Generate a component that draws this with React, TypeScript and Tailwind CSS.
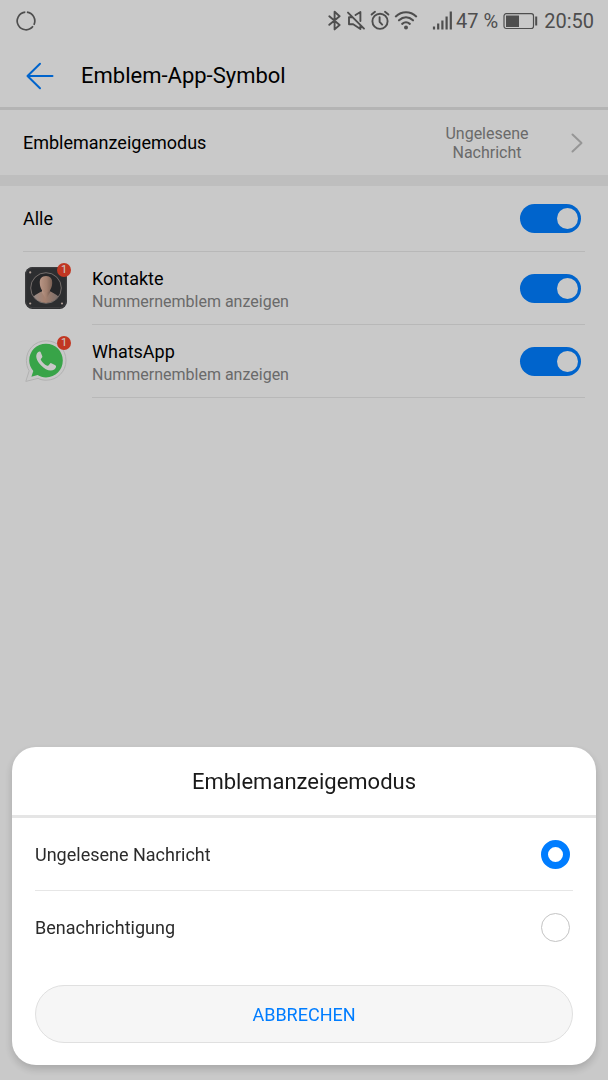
import React, { useState } from 'react';

interface BadgeApp {
    id: string;
    name: string;
    hint: string;
    icon: React.ReactNode;
}

const BackIcon = () => (
    <svg width="28" height="28" viewBox="0 0 28 28" fill="none" stroke="#007dff" strokeWidth="2" strokeLinecap="round" strokeLinejoin="round">
        <path d="M26.5 14H1.5M14 1.8 1.5 14 14 26.2" />
    </svg>
);

const StatusIcons = () => (
    <svg width="128" height="24" viewBox="0 0 128 24" fill="none" stroke="#626262" strokeWidth="1.9" strokeLinecap="round" strokeLinejoin="round" aria-hidden="true">
        {/* bluetooth */}
        <path d="M1.3 7.3 11.6 16 6.6 20.4V2.8L11.6 7.2 1.3 15.8" />
        {/* muted speaker */}
        <path d="M20 3.6 36 19.6M21 8.2V15.2h4.2l7.200 4.800V16.500M21 8.200h3M27.500 6 32.400 3V12" />
        {/* alarm clock */}
        <circle cx="52" cy="12.3" r="7.6" />
        <path d="M51.6 8.2V12.8l2.6 2.800M43.600 5.600 47 2.800M60.400 5.600 57 2.800" />
        {/* wifi */}
        <g strokeWidth="2.1">
            <path d="M67.800 7.400c6-5.600 14.400-5.600 20.400 0M71 11.300c4.300-4 9.700-4 14 0M74.200 14.900c2.400-2.100 5.200-2.100 7.600 0" />
        </g>
        <circle cx="78" cy="18.500" r="2" fill="#626262" stroke="none" />
        {/* signal strength */}
        <path d="M106 20.500v-3M110.200 20.500v-6M114.400 20.500V11.500M118.600 20.500V7.500M122.800 20.500V2.500" strokeWidth="2.200" strokeLinecap="butt" />
    </svg>
);

const BatteryIcon = () => (
    <svg width="36" height="18" viewBox="0 0 36 18" aria-hidden="true">
        <rect x="1" y="1.700" width="29.500" height="14.800" rx="2.200" fill="none" stroke="#626262" strokeWidth="1.200" />
        <rect x="3" y="3.500" width="13" height="11.500" fill="#626262" />
        <rect x="32.200" y="4.500" width="2" height="9" fill="#626262" />
    </svg>
);

const ContactsIcon = () => (
    <svg width="42" height="42" viewBox="0 0 42 42" aria-hidden="true">
        <defs>
            <linearGradient id="skin" x1="0" y1="0" x2="1" y2="0">
                <stop offset="0" stopColor="#e6bba6" />
                <stop offset="0.55" stopColor="#cba08b" />
                <stop offset="1" stopColor="#98796a" />
            </linearGradient>
            <linearGradient id="shirt" x1="0" y1="0" x2="1" y2="0">
                <stop offset="0" stopColor="#b5afae" />
                <stop offset="0.45" stopColor="#d0a28c" />
                <stop offset="1" stopColor="#8d8583" />
            </linearGradient>
            <clipPath id="portrait">
                <circle cx="21" cy="21" r="15" />
            </clipPath>
        </defs>
        <rect width="42" height="42" rx="7.5" fill="#393a3d" />
        <rect x="0.7" y="0.7" width="40.6" height="40" rx="7" fill="none" stroke="#505153" />
        <circle cx="21" cy="21" r="15.3" fill="#303134" stroke="#aaa09b" strokeWidth="0.8" />
        <g clipPath="url(#portrait)">
            <path d="M6 38c0-8 3-9.500 10.500-13.500h9C33 28.500 36 30 36 38z" fill="url(#shirt)" />
            <path d="M17 20h8v5.500L21 32l-4-6.500z" fill="url(#skin)" />
            <path d="M21 9c4.500 0 6.500 3 6.200 7.200C27 21 24.500 25.500 21 25.500s-6-4.500-6.200-9.300C14.500 12 16.500 9 21 9z" fill="url(#skin)" />
        </g>
        <circle cx="5.2" cy="5.4" r="1.1" fill="#dcc8bd" />
        <circle cx="5.2" cy="36.5" r="1.1" fill="#dcc8bd" />
        <circle cx="37" cy="36.5" r="1.1" fill="#dcc8bd" />
    </svg>
);

const WhatsAppIcon = () => (
    <svg width="42" height="42" viewBox="0 0 42 42" aria-hidden="true">
        <path d="M21.200.8C32.500.8 41 9.500 41 20.500S32.300 40.200 21.200 40.200c-3 0-5.700-.6-8.200-1.800L.8 41.400 4.200 30.800C2.300 27.600 1.400 24.200 1.400 20.500 1.400 9.500 10 .8 21.200.8z" fill="#fbfbfb" stroke="#dedede" strokeWidth="1" />
        <path d="M21 3.800c9.500 0 16.800 7.300 16.800 16.800S30.500 37.400 21 37.400c-3.200 0-5.900-.8-8.400-2.300l-6.200 1.600 1.900-5.800c-2.600-3-4.100-6.500-4.100-10.300C4.200 11.100 11.500 3.800 21 3.800z" fill="#46cd5b" />
        <path d="M14.900 11.400c-.6-.1-1.400.1-2 .8-3.200 3.500-1.400 8.400 3 13 4.600 4.800 9.800 6.700 13.400 4.200 1.600-1.100 2-3 1.600-3.700-.3-.5-3.800-2.300-4.600-2.500-.6-.2-1 0-1.400.5l-1.500 1.800c-.4.400-.8.400-1.300.2-2.700-1.200-4.800-3.100-6.200-5.700-.3-.5-.2-.8.200-1.300.7-.8 1.500-1.500 1.200-2.400l-1.600-4.100c-.2-.5-.4-.7-.8-.8z" fill="#fbfbfb" />
    </svg>
);

const apps: BadgeApp[] = [
    { id: 'contacts', name: 'Kontakte', hint: 'Nummernemblem anzeigen', icon: <ContactsIcon /> },
    { id: 'whatsapp', name: 'WhatsApp', hint: 'Nummernemblem anzeigen', icon: <WhatsAppIcon /> },
];

const modes = ['Ungelesene Nachricht', 'Benachrichtigung'];

interface ToggleProps {
    id: string;
    checked: boolean;
    onChange: (checked: boolean) => void;
}

const Toggle: React.FC<ToggleProps> = ({ id, checked, onChange }) => (
    <input
        id={id}
        type="checkbox"
        role="switch"
        checked={checked}
        onChange={(e) => onChange(e.target.checked)}
        className="mr-1 flex h-[29px] w-[61px] shrink-0 appearance-none items-center rounded-full bg-[#c8c8c8] px-[3px] before:size-[21px] before:rounded-full before:bg-[#fbfbfb] before:content-[''] checked:justify-end checked:bg-[#007dff]"
    />
);

const App: React.FC = () => {
    const [enabled, setEnabled] = useState<Record<string, boolean>>({ contacts: true, whatsapp: true });
    const [mode, setMode] = useState(modes[0]);
    const [dialogOpen, setDialogOpen] = useState(true);

    const allEnabled = apps.every((app) => enabled[app.id]);
    const toggleAll = (value: boolean) => setEnabled({ contacts: value, whatsapp: value });

    return (
        <div className="min-h-screen bg-[#fcfcfc] font-[Roboto,sans-serif] text-black">
            <div className="flex h-[42px] items-center justify-between pr-[14px] pl-4 text-[20px] text-[#626262]">
                <svg width="20" height="20" viewBox="0 0 20 20" fill="none" stroke="#626262" strokeWidth="1.7" aria-hidden="true">
                    <path d="M10.9 1.200A8.800 8.800 0 0 1 17.900 13.800M17 15.300A8.800 8.800 0 1 1 9.300 1.200" />
                </svg>
                <div className="flex items-center">
                    <StatusIcons />
                    <span>47 %</span>
                    <span className="mx-[5px]"><BatteryIcon /></span>
                    <span>20:50</span>
                </div>
            </div>

            <header className="flex h-[68px] items-center gap-[27px] border-b-[3px] border-[#e2e2e2] pt-[2px] pl-[26px]">
                <button aria-label="Zurück"><BackIcon /></button>
                <h1 className="text-[22px]">Emblem-App-Symbol</h1>
            </header>

            <main>
                <button onClick={() => setDialogOpen(true)} className="flex h-[65px] w-full items-center pr-[25px] pl-[23px] text-left">
                    <span className="flex-1 text-[18px]">Emblemanzeigemodus</span>
                    <span className="mr-[41px] w-[86px] text-center text-[16px] leading-[19px] text-[#858585]">{mode}</span>
                    <svg width="12" height="20" viewBox="0 0 12 20" fill="none" stroke="#bcbcbc" strokeWidth="2" strokeLinecap="round" strokeLinejoin="round" aria-hidden="true">
                        <path d="m1.500 1.500 9 8.500-9 8.500" />
                    </svg>
                </button>
                <div className="h-[11px] bg-[#eeeeee]" />

                <div className="px-[23px]">
                    <div className="flex h-[66px] items-center justify-between border-b border-[#e6e6e6]">
                        <label htmlFor="all" className="text-[18px]">Alle</label>
                        <Toggle id="all" checked={allEnabled} onChange={toggleAll} />
                    </div>
                    <ul>
                        {apps.map((app) => (
                            <li key={app.id} className="flex items-center">
                                <div className="relative mb-[2px] ml-[2px] shrink-0">
                                    {app.icon}
                                    <span className="absolute -top-1 -right-1 flex size-[14px] items-center justify-center rounded-full bg-[#f2452b] text-[11px] leading-[14px] text-white">1</span>
                                </div>
                                <div className="ml-[25px] flex min-h-[73px] flex-1 items-center justify-between border-b border-[#e6e6e6]">
                                    <label htmlFor={app.id} className="flex flex-col pt-[3px]">
                                        <span className="text-[18px] leading-6">{app.name}</span>
                                        <span className="text-[16px] leading-[22px] text-[#858585]">{app.hint}</span>
                                    </label>
                                    <Toggle
                                        id={app.id}
                                        checked={enabled[app.id]}
                                        onChange={(value) => setEnabled({ ...enabled, [app.id]: value })}
                                    />
                                </div>
                            </li>
                        ))}
                    </ul>
                </div>
            </main>

            {dialogOpen && (
                <div className="fixed inset-0 flex items-end bg-black/20 px-3 pb-[15px]">
                    <div role="dialog" aria-modal="true" aria-labelledby="mode-title" className="flex-1 rounded-[24px] bg-white pb-[22px] shadow-[0_4px_9px_rgba(0,0,0,0.18)]">
                        <h2 id="mode-title" className="border-b-[3px] border-[#e5e5e5] pt-[2px] text-center text-[22px] leading-[66px] text-[#1a1a1a]">
                            Emblemanzeigemodus
                        </h2>
                        <div className="px-[23px]">
                            {modes.map((name) => (
                                <label key={name} className="flex h-[73px] items-center justify-between border-b border-[#e6e6e6] pr-[3px] text-[18px] text-[#2b2b2b] last-of-type:border-transparent">
                                    {name}
                                    <input
                                        type="radio"
                                        name="mode"
                                        checked={mode === name}
                                        onChange={() => setMode(name)}
                                        className="size-[29px] appearance-none rounded-full border border-[#c4c4c4] bg-white checked:border-[7px] checked:border-[#007dff]"
                                    />
                                </label>
                            ))}
                            <button
                                onClick={() => setDialogOpen(false)}
                                className="mt-[21px] h-[58px] w-full rounded-full border border-[#e0e0e0] bg-[#f6f6f6] text-[18px] text-[#007dff]"
                            >
                                ABBRECHEN
                            </button>
                        </div>
                    </div>
                </div>
            )}
        </div>
    );
};

export default App;
